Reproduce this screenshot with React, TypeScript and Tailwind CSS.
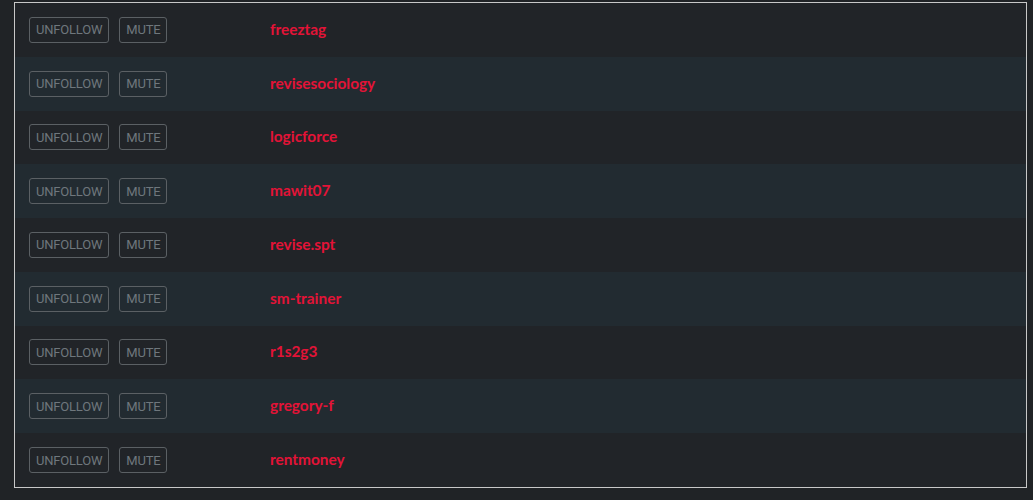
const users = [
  'freeztag',
  'revisesociology',
  'logicforce',
  'mawit07',
  'revise.spt',
  'sm-trainer',
  'r1s2g3',
  'gregory-f',
  'rentmoney',
];

export default function App() {
  return (
    <div className="h-[500px] w-full bg-[#202326] pt-[2px] pl-[14px] pr-[6px] font-['Lato','Open_Sans',sans-serif]">
      <div className="border border-[#c8c8c8]">
        {users.map((name, i) => (
          <div
            key={name}
            className={`flex h-[53.78px] items-center ${i % 2 === 1 ? 'bg-[#222b31]' : 'bg-[#212428]'}`}
          >
            <div className="flex w-[255px] items-center gap-[10px] pl-[14px] font-['Roboto',sans-serif]">
              <button className="h-[26px] rounded-[3px] border border-[#5b6064] px-[6px] text-[13px] leading-none tracking-[-0.2px] text-[#6f777d]">
                UNFOLLOW
              </button>
              <button className="h-[26px] rounded-[3px] border border-[#5b6064] px-[6px] text-[13px] leading-none tracking-[-0.2px] text-[#6f777d]">
                MUTE
              </button>
            </div>
            <span className="-mt-[1px] text-[15.4px] font-bold text-[#e31337]">{name}</span>
          </div>
        ))}
      </div>
    </div>
  );
}
